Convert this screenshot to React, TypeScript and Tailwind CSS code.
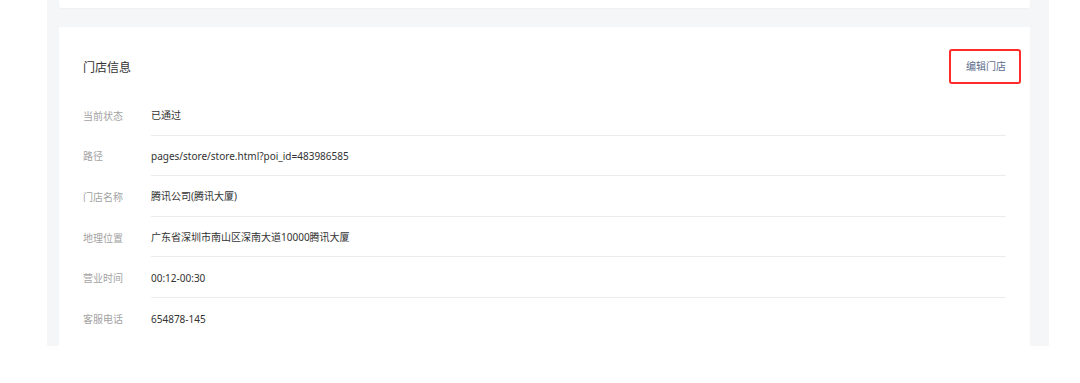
import React from 'react';

const rows = [
    { label: '当前状态', value: '已通过' },
    { label: '路径', value: 'pages/store/store.html?poi_id=483986585' },
    { label: '门店名称', value: '腾讯公司(腾讯大厦)' },
    { label: '地理位置', value: '广东省深圳市南山区深南大道10000腾讯大厦' },
    { label: '营业时间', value: '00:12-00:30' },
    { label: '客服电话', value: '654878-145' },
];

export default function App() {
    return (
        <div
            className="w-[1080px] h-[383px] bg-white overflow-hidden"
            style={{ fontFamily: '"Noto Sans", "Noto Sans CJK SC", sans-serif' }}
        >
            <div className="ml-[47px] w-[1002px] h-[346px] bg-[#f5f6f8] pl-[12px] pr-[19px] flex flex-col">
                {/* previous card, mostly scrolled out */}
                <div className="h-[8px] bg-white rounded-b-[2px] shadow-[0_1px_2px_rgba(0,0,0,0.03)]"></div>

                {/* STORE INFO CARD */}
                <div className="mt-[19px] flex-1 bg-white pl-[24px] pr-[24px]">
                    <div className="pt-[22px] h-[68px] flex items-start justify-between">
                        <div className="h-[35px] pt-[2px] flex items-center text-[12px] text-[#333]">门店信息</div>
                        <button className="h-[35px] -mr-[15px] pl-[15px] pr-[13px] border-2 border-[#ff2a2a] rounded-[3px] text-[10px] text-[#5b6b8c] flex items-center">
                            编辑门店
                        </button>
                    </div>

                    <div className="flex flex-col">
                        {rows.map((row, i) => (
                            <div key={row.label} className="flex h-[40.6px]">
                                <div className="w-[68px] pt-[2px] flex items-center text-[10px] text-[#a3a3a3]">{row.label}</div>
                                <div
                                    className={
                                        i < rows.length - 1
                                            ? 'flex-1 pt-[2px] flex items-center border-b border-[#ececec] text-[10px] text-[#333]'
                                            : 'flex-1 pt-[2px] flex items-center text-[10px] text-[#333]'
                                    }
                                >
                                    {row.value}
                                </div>
                            </div>
                        ))}
                    </div>
                </div>
            </div>
        </div>
    );
}
